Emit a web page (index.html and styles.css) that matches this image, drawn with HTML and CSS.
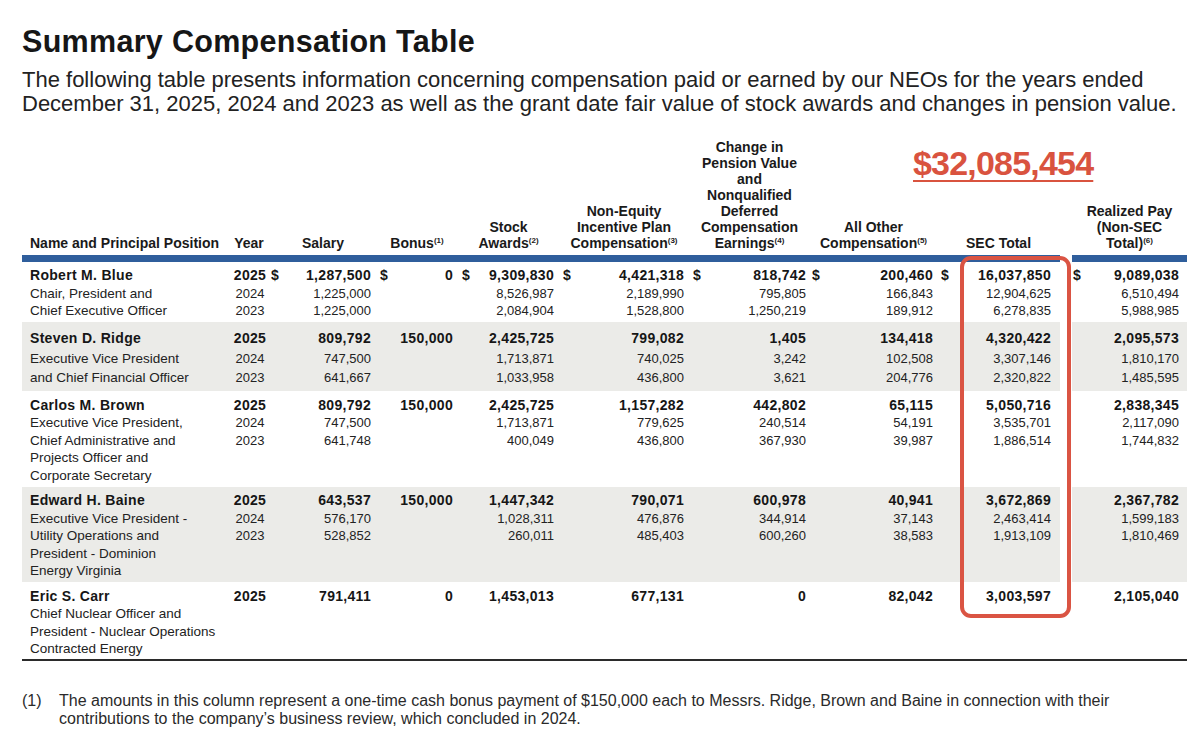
FILE: index.html
```html
<!DOCTYPE html>
<html>
<head>
<meta charset="UTF-8">
<title>Summary Compensation Table</title>
<link rel="stylesheet" href="styles.css">
</head>
<body>
<div class="page">
<h1 class="titulo">Summary Compensation Table</h1>
<p class="intro">The following table presents information concerning compensation paid or earned by our NEOs for the years ended<br>December 31, 2025, 2024 and 2023 as well as the grant date fair value of stock awards and changes in pension value.</p>

<div class="hoja">
<div class="marca">$32,085,454</div>
<div class="caja"></div>
<table class="sct" cellpadding="0" cellspacing="0">
<colgroup>
<col style="width:206px"><col style="width:42px"><col style="width:106px"><col style="width:82px"><col style="width:101px"><col style="width:130px"><col style="width:121px"><col style="width:127px"><col style="width:123px"><col style="width:12px"><col style="width:115px">
</colgroup>
<thead>
<tr>
<th class="nom">Name and Principal Position</th>
<th>Year</th>
<th>Salary</th>
<th>Bonus<sup>(1)</sup></th>
<th>Stock<br>Awards<sup>(2)</sup></th>
<th>Non-Equity<br>Incentive Plan<br>Compensation<sup>(3)</sup></th>
<th>Change in<br>Pension Value<br>and<br>Nonqualified<br>Deferred<br>Compensation<br>Earnings<sup>(4)</sup></th>
<th>All Other<br>Compensation<sup>(5)</sup></th>
<th>SEC Total</th>
<th class="hueco"></th>
<th>Realized Pay<br>(Non-SEC<br>Total)<sup>(6)</sup></th>
</tr>
</thead>

<tbody class="g1">
<tr class="b primera">
<td class="nom">Robert M. Blue</td><td class="an">2025</td>
<td class="s1"><span class="d">$</span>1,287,500</td>
<td class="s2"><span class="d">$</span>0</td>
<td class="s3"><span class="d">$</span>9,309,830</td>
<td class="s4"><span class="d">$</span>4,421,318</td>
<td class="s5"><span class="d">$</span>818,742</td>
<td class="s6"><span class="d">$</span>200,460</td>
<td class="s7"><span class="d">$</span>16,037,850</td>
<td class="hueco"></td>
<td class="s8"><span class="d">$</span>9,089,038</td>
</tr>
<tr>
<td class="nom">Chair, President and</td><td class="an">2024</td>
<td class="s1">1,225,000</td><td class="s2"></td><td class="s3">8,526,987</td><td class="s4">2,189,990</td><td class="s5">795,805</td><td class="s6">166,843</td><td class="s7">12,904,625</td><td class="hueco"></td><td class="s8">6,510,494</td>
</tr>
<tr class="ultima">
<td class="nom">Chief Executive Officer</td><td class="an">2023</td>
<td class="s1">1,225,000</td><td class="s2"></td><td class="s3">2,084,904</td><td class="s4">1,528,800</td><td class="s5">1,250,219</td><td class="s6">189,912</td><td class="s7">6,278,835</td><td class="hueco"></td><td class="s8">5,988,985</td>
</tr>
</tbody>

<tbody class="gris g2">
<tr class="b primera">
<td class="nom">Steven D. Ridge</td><td class="an">2025</td>
<td class="s1">809,792</td><td class="s2">150,000</td><td class="s3">2,425,725</td><td class="s4">799,082</td><td class="s5">1,405</td><td class="s6">134,418</td><td class="s7">4,320,422</td><td class="hueco"></td><td class="s8">2,095,573</td>
</tr>
<tr>
<td class="nom">Executive Vice President</td><td class="an">2024</td>
<td class="s1">747,500</td><td class="s2"></td><td class="s3">1,713,871</td><td class="s4">740,025</td><td class="s5">3,242</td><td class="s6">102,508</td><td class="s7">3,307,146</td><td class="hueco"></td><td class="s8">1,810,170</td>
</tr>
<tr class="ultima">
<td class="nom">and Chief Financial Officer</td><td class="an">2023</td>
<td class="s1">641,667</td><td class="s2"></td><td class="s3">1,033,958</td><td class="s4">436,800</td><td class="s5">3,621</td><td class="s6">204,776</td><td class="s7">2,320,822</td><td class="hueco"></td><td class="s8">1,485,595</td>
</tr>
</tbody>

<tbody class="g3">
<tr class="b primera">
<td class="nom">Carlos M. Brown</td><td class="an">2025</td>
<td class="s1">809,792</td><td class="s2">150,000</td><td class="s3">2,425,725</td><td class="s4">1,157,282</td><td class="s5">442,802</td><td class="s6">65,115</td><td class="s7">5,050,716</td><td class="hueco"></td><td class="s8">2,838,345</td>
</tr>
<tr>
<td class="nom">Executive Vice President,</td><td class="an">2024</td>
<td class="s1">747,500</td><td class="s2"></td><td class="s3">1,713,871</td><td class="s4">779,625</td><td class="s5">240,514</td><td class="s6">54,191</td><td class="s7">3,535,701</td><td class="hueco"></td><td class="s8">2,117,090</td>
</tr>
<tr>
<td class="nom">Chief Administrative and</td><td class="an">2023</td>
<td class="s1">641,748</td><td class="s2"></td><td class="s3">400,049</td><td class="s4">436,800</td><td class="s5">367,930</td><td class="s6">39,987</td><td class="s7">1,886,514</td><td class="hueco"></td><td class="s8">1,744,832</td>
</tr>
<tr>
<td class="nom">Projects Officer and</td><td></td><td></td><td></td><td></td><td></td><td></td><td></td><td></td><td class="hueco"></td><td></td>
</tr>
<tr class="ultima">
<td class="nom">Corporate Secretary</td><td></td><td></td><td></td><td></td><td></td><td></td><td></td><td></td><td class="hueco"></td><td></td>
</tr>
</tbody>

<tbody class="gris g4">
<tr class="b primera">
<td class="nom">Edward H. Baine</td><td class="an">2025</td>
<td class="s1">643,537</td><td class="s2">150,000</td><td class="s3">1,447,342</td><td class="s4">790,071</td><td class="s5">600,978</td><td class="s6">40,941</td><td class="s7">3,672,869</td><td class="hueco"></td><td class="s8">2,367,782</td>
</tr>
<tr>
<td class="nom">Executive Vice President -</td><td class="an">2024</td>
<td class="s1">576,170</td><td class="s2"></td><td class="s3">1,028,311</td><td class="s4">476,876</td><td class="s5">344,914</td><td class="s6">37,143</td><td class="s7">2,463,414</td><td class="hueco"></td><td class="s8">1,599,183</td>
</tr>
<tr>
<td class="nom">Utility Operations and</td><td class="an">2023</td>
<td class="s1">528,852</td><td class="s2"></td><td class="s3">260,011</td><td class="s4">485,403</td><td class="s5">600,260</td><td class="s6">38,583</td><td class="s7">1,913,109</td><td class="hueco"></td><td class="s8">1,810,469</td>
</tr>
<tr>
<td class="nom">President - Dominion</td><td></td><td></td><td></td><td></td><td></td><td></td><td></td><td></td><td class="hueco"></td><td></td>
</tr>
<tr class="ultima">
<td class="nom">Energy Virginia</td><td></td><td></td><td></td><td></td><td></td><td></td><td></td><td></td><td class="hueco"></td><td></td>
</tr>
</tbody>

<tbody class="g5">
<tr class="b primera">
<td class="nom">Eric S. Carr</td><td class="an">2025</td>
<td class="s1">791,411</td><td class="s2">0</td><td class="s3">1,453,013</td><td class="s4">677,131</td><td class="s5">0</td><td class="s6">82,042</td><td class="s7">3,003,597</td><td class="hueco"></td><td class="s8">2,105,040</td>
</tr>
<tr>
<td class="nom">Chief Nuclear Officer and</td><td></td><td></td><td></td><td></td><td></td><td></td><td></td><td></td><td class="hueco"></td><td></td>
</tr>
<tr>
<td class="nom">President - Nuclear Operations</td><td></td><td></td><td></td><td></td><td></td><td></td><td></td><td></td><td class="hueco"></td><td></td>
</tr>
<tr class="ultima">
<td class="nom">Contracted Energy</td><td></td><td></td><td></td><td></td><td></td><td></td><td></td><td></td><td class="hueco"></td><td></td>
</tr>
</tbody>
</table>
<div class="regla"></div>
</div>

<div class="nota">
<span class="num">(1)</span>
<span class="txt">The amounts in this column represent a one-time cash bonus payment of $150,000 each to Messrs. Ridge, Brown and Baine in connection with their<br>contributions to the company’s business review, which concluded in 2024.</span>
</div>
</div>
</body>
</html>
```

FILE: styles.css
```css
html, body {
    margin: 0;
    padding: 0;
    background: #ffffff;
}
.page {
    padding: 0 0 0 22px;
    font-family: "Liberation Sans", Arial, sans-serif;
    color: #1c1c1c;
}
.titulo {
    margin: 24px 0 0 0;
    font-size: 30.5px;
    line-height: 34px;
    font-weight: bold;
    letter-spacing: 0.3px;
    color: #161616;
}
.intro {
    margin: 10px 0 0 0;
    font-size: 22px;
    line-height: 24px;
    color: #222;
}
.hoja {
    position: relative;
    width: 1165px;
    margin-top: 23px;
}
.marca {
    position: absolute;
    left: 891px;
    top: 7px;
    font-size: 34px;
    line-height: 34px;
    font-weight: bold;
    letter-spacing: -0.8px;
    color: #d9533f;
    text-decoration: underline;
    text-decoration-thickness: 2px;
    text-underline-offset: 5px;
}
.caja {
    position: absolute;
    left: 938px;
    top: 117px;
    width: 111px;
    height: 362px;
    box-sizing: border-box;
    border: 4.5px solid #da5443;
    border-radius: 11px;
    z-index: 2;
}
.sct {
    table-layout: fixed;
    width: 1165px;
    border-collapse: separate;
    border-spacing: 0;
}
.sct th {
    font-size: 14px;
    line-height: 16px;
    font-weight: bold;
    text-align: center;
    vertical-align: bottom;
    padding: 0 0 4px 0;
    border-bottom: 7px solid #2f5e9c;
    color: #1a1a1a;
    white-space: nowrap;
}
.sct th.nom {
    text-align: left;
    padding-left: 8px;
}
.sct th.hueco {
    border-bottom: none;
}
.sct sup {
    font-size: 8px;
    line-height: 0;
    vertical-align: 5px;
}
.sct td {
    font-size: 13px;
    line-height: 17.5px;
    padding: 0;
    text-align: right;
    white-space: nowrap;
    color: #222;
}
.sct td.nom {
    text-align: left;
    padding-left: 8px;
    font-size: 13.5px;
}
.sct td.an {
    text-align: center;
    padding-left: 2px;
}
.sct tr.b td {
    font-weight: bold;
    font-size: 14px;
    letter-spacing: 0.3px;
    color: #161616;
}
.d {
    float: left;
}
.s1 { padding-right: 5px !important; padding-left: 1px !important; }
.s2 { padding-right: 5px !important; padding-left: 4px !important; }
.s3 { padding-right: 5px !important; padding-left: 4px !important; }
.s4 { padding-right: 5px !important; padding-left: 4px !important; }
.s5 { padding-right: 4px !important; padding-left: 4px !important; }
.s6 { padding-right: 4px !important; padding-left: 2px !important; }
.s7 { padding-right: 9px !important; padding-left: 4px !important; }
.s8 { padding-right: 8px !important; padding-left: 1px !important; }

.gris td {
    background-color: #ebebe8;
}
.gris td.hueco {
    background-color: #ffffff;
}

.g1 tr.primera td { padding-top: 5px; }
.g1 tr.ultima td { padding-bottom: 2.5px; }
.g2 td { line-height: 19.5px; }
.g2 tr.primera td { padding-top: 7px; }
.g2 tr.ultima td { padding-bottom: 3px; }
.g3 tr.primera td { padding-top: 6px; }
.g3 tr.ultima td { padding-bottom: 2.5px; }
.g4 tr.primera td { padding-top: 5.5px; }
.g4 tr.ultima td { padding-bottom: 2px; }
.g5 tr.primera td { padding-top: 6px; }
.g5 tr.ultima td { padding-bottom: 0px; }

.regla {
    height: 2px;
    background: #2b2b2b;
    margin-top: 1px;
}
.nota {
    display: flex;
    margin-top: 31px;
    font-size: 16px;
    line-height: 18px;
    color: #2a2a2a;
}
.nota .num {
    width: 37px;
    flex: none;
}
```
